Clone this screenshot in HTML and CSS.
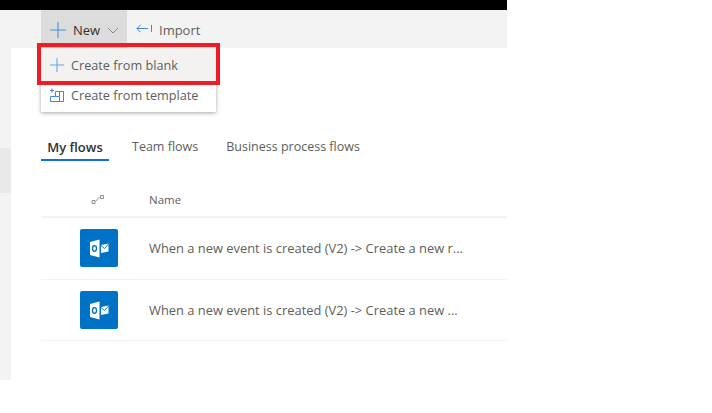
FILE: index.html
```html
<!DOCTYPE html>
<html lang="en">
<head>
    <meta charset="UTF-8">
    <title>My flows</title>
    <link rel="stylesheet" href="styles.css">
</head>
<body>
    <div class="app">
        <div class="topbar"></div>

        <div class="commandbar">
            <button class="cmd cmd-new">
                <svg class="icon-plus" width="16" height="16" viewBox="0 0 16 16"><path d="M8 0v16M0 8h16" stroke="#4f8fdc" stroke-width="1.1" fill="none"/></svg>
                <span class="cmd-label">New</span>
                <svg class="icon-chevron" width="12" height="7" viewBox="0 0 12 7"><path d="M1 1l5 5 5-5" stroke="#8a8886" stroke-width="1" fill="none"/></svg>
            </button>
            <button class="cmd cmd-import">
                <svg class="icon-import" width="16" height="9" viewBox="0 0 16 9"><path d="M4.500 .8L1 4.500l3.500 3.700M1 4.500h11M15.500 1v7" stroke="#3f86e0" stroke-width="1" fill="none"/></svg>
                <span class="cmd-label">Import</span>
            </button>
        </div>

        <div class="content">
            <div class="sidebar"><div class="sidebar-item"></div></div>

            <div class="main">
                <div class="tabs">
                    <div class="tab active">My flows</div>
                    <div class="tab">Team flows</div>
                    <div class="tab">Business process flows</div>
                </div>

                <div class="table-head">
                    <div class="col-icon">
                        <svg class="icon-flow" width="13" height="9" viewBox="0 0 13 9"><path d="M1 5.500h3v3H1zM9.500 .5h3v3h-3zM4.500 6.500l4-4.500" stroke="#8a8886" stroke-width=".9" fill="none"/></svg>
                    </div>
                    <div class="col-name">Name</div>
                </div>

                <div class="row">
                    <div class="col-icon">
                        <div class="outlook">
                            <svg width="20" height="19" viewBox="0 0 20 19"><path d="M1 3L10.500 .5v18L1 16z" fill="#fff"/><ellipse cx="5.500" cy="9.500" rx="2" ry="2.800" fill="none" stroke="#0072c6" stroke-width="1.300"/><path d="M12 6l7.500-1.500v8L12 14z" fill="#fff"/><path d="M12 6.500l3.500 3 4-4.500" stroke="#0072c6" stroke-width=".9" fill="none"/></svg>
                        </div>
                    </div>
                    <div class="col-name">When a new event is created (V2) -&gt; Create a new r...</div>
                </div>

                <div class="row">
                    <div class="col-icon">
                        <div class="outlook">
                            <svg width="20" height="19" viewBox="0 0 20 19"><path d="M1 3L10.500 .5v18L1 16z" fill="#fff"/><ellipse cx="5.500" cy="9.500" rx="2" ry="2.800" fill="none" stroke="#0072c6" stroke-width="1.300"/><path d="M12 6l7.500-1.500v8L12 14z" fill="#fff"/><path d="M12 6.500l3.500 3 4-4.500" stroke="#0072c6" stroke-width=".9" fill="none"/></svg>
                        </div>
                    </div>
                    <div class="col-name">When a new event is created (V2) -&gt; Create a new ...</div>
                </div>
            </div>
        </div>

        <!-- dropdown sits over the page -->
        <div class="menu">
            <div class="menu-item hover">
                <svg width="16" height="16" viewBox="0 0 16 16"><path d="M8 1v14M1 8h14" stroke="#6ea6e6" stroke-width="1.100" fill="none"/></svg>
                <span>Create from blank</span>
            </div>
            <div class="menu-item">
                <svg width="16" height="15" viewBox="0 0 16 15"><path d="M6.500 3.500h8v10h-13v-5h5zM6.500 8.500h4v5M10.500 3.500v5M3 .5v4M1 2.500h4" stroke="#3f86e0" stroke-width="1" fill="none"/></svg>
                <span>Create from template</span>
            </div>
        </div>
        <div class="highlight"></div>
    </div>
</body>
</html>
```

FILE: styles.css
```css
body, html {
    margin: 0;
    padding: 0;
    background: #fff;
    overflow: hidden;
}

body {
    font-family: 'Open Sans', 'Noto Sans', sans-serif;
    color: #605e5c;
}

.app {
    position: relative;
    display: flex;
    flex-direction: column;
    width: 507px;
    height: 380px;
}

.topbar {
    height: 10px;
    background: #000;
}

/* Command bar */
.commandbar {
    display: flex;
    height: 38px;
    padding-left: 41px;
    background: #f3f3f3;
}

.cmd {
    display: flex;
    align-items: center;
    height: 38px;
    padding: 2px 0 0;
    border: none;
    background: none;
    font-family: inherit;
    font-size: 13px;
    color: #605e5c;
}

.cmd-new {
    width: 86px;
    padding-left: 9px;
    background: #dcdcdc;
    color: #323130;
}

.cmd-new .cmd-label {
    margin-left: 7px;
}

.icon-chevron {
    margin-left: 7px;
}

.icon-import {
    margin-top: -3px;
}

.cmd-import {
    padding-left: 9px;
}

.cmd-import .cmd-label {
    margin-left: 7px;
}

/* Page */
.content {
    display: flex;
    flex: 1;
}

.sidebar {
    width: 11px;
    padding-top: 100px;
    background: #f3f3f3;
}

.sidebar-item {
    height: 45px;
    background: #e9e9e9;
}

.main {
    flex: 1;
    padding-left: 30px;
}

.tabs {
    display: flex;
    gap: 28px;
    margin-top: 86px;
    height: 27px;
}

.tab {
    font-size: 12.500px;
    line-height: 26px;
    color: #605e5c;
}

.tab.active {
    width: 68px;
    margin-right: -5px;
    text-align: center;
    font-size: 13px;
    font-weight: 600;
    color: #323130;
    border-bottom: 2px solid #0f6cef;
    box-sizing: border-box;
}

.table-head {
    display: flex;
    align-items: center;
    height: 57px;
    padding-top: 22px;
    box-sizing: border-box;
    border-bottom: 2px solid #f3f2f1;
    font-size: 11.500px;
}

.row {
    display: flex;
    align-items: center;
    height: 62px;
    padding-bottom: 1px;
    box-sizing: border-box;
    border-bottom: 1px solid #f3f2f1;
    font-size: 12.900px;
}

.row:last-child {
    height: 61px;
    padding-bottom: 0;
}

.col-icon {
    display: flex;
    width: 108px;
    padding-left: 39px;
    box-sizing: border-box;
    flex-shrink: 0;
}

.col-name {
    white-space: nowrap;
}

.icon-flow {
    margin-left: 11px;
}

.outlook {
    display: flex;
    align-items: center;
    justify-content: center;
    width: 38px;
    height: 38px;
    border-radius: 2px;
    background: #0072c6;
}

/* Dropdown */
.menu {
    position: absolute;
    left: 41px;
    top: 48px;
    width: 175px;
    height: 64px;
    background: #fff;
    box-shadow: 0 1px 4px rgba(0, 0, 0, 0.35);
}

.menu-item {
    display: flex;
    align-items: center;
    gap: 6px;
    height: 28px;
    padding-left: 8px;
    font-size: 12.700px;
    color: #605e5c;
}

.menu-item.hover {
    height: 33px;
    background: #f3f2f1;
}

.highlight {
    position: absolute;
    left: 37px;
    top: 43px;
    width: 183px;
    height: 42px;
    box-sizing: border-box;
    border: 4px solid #ee1c25;
}
```
